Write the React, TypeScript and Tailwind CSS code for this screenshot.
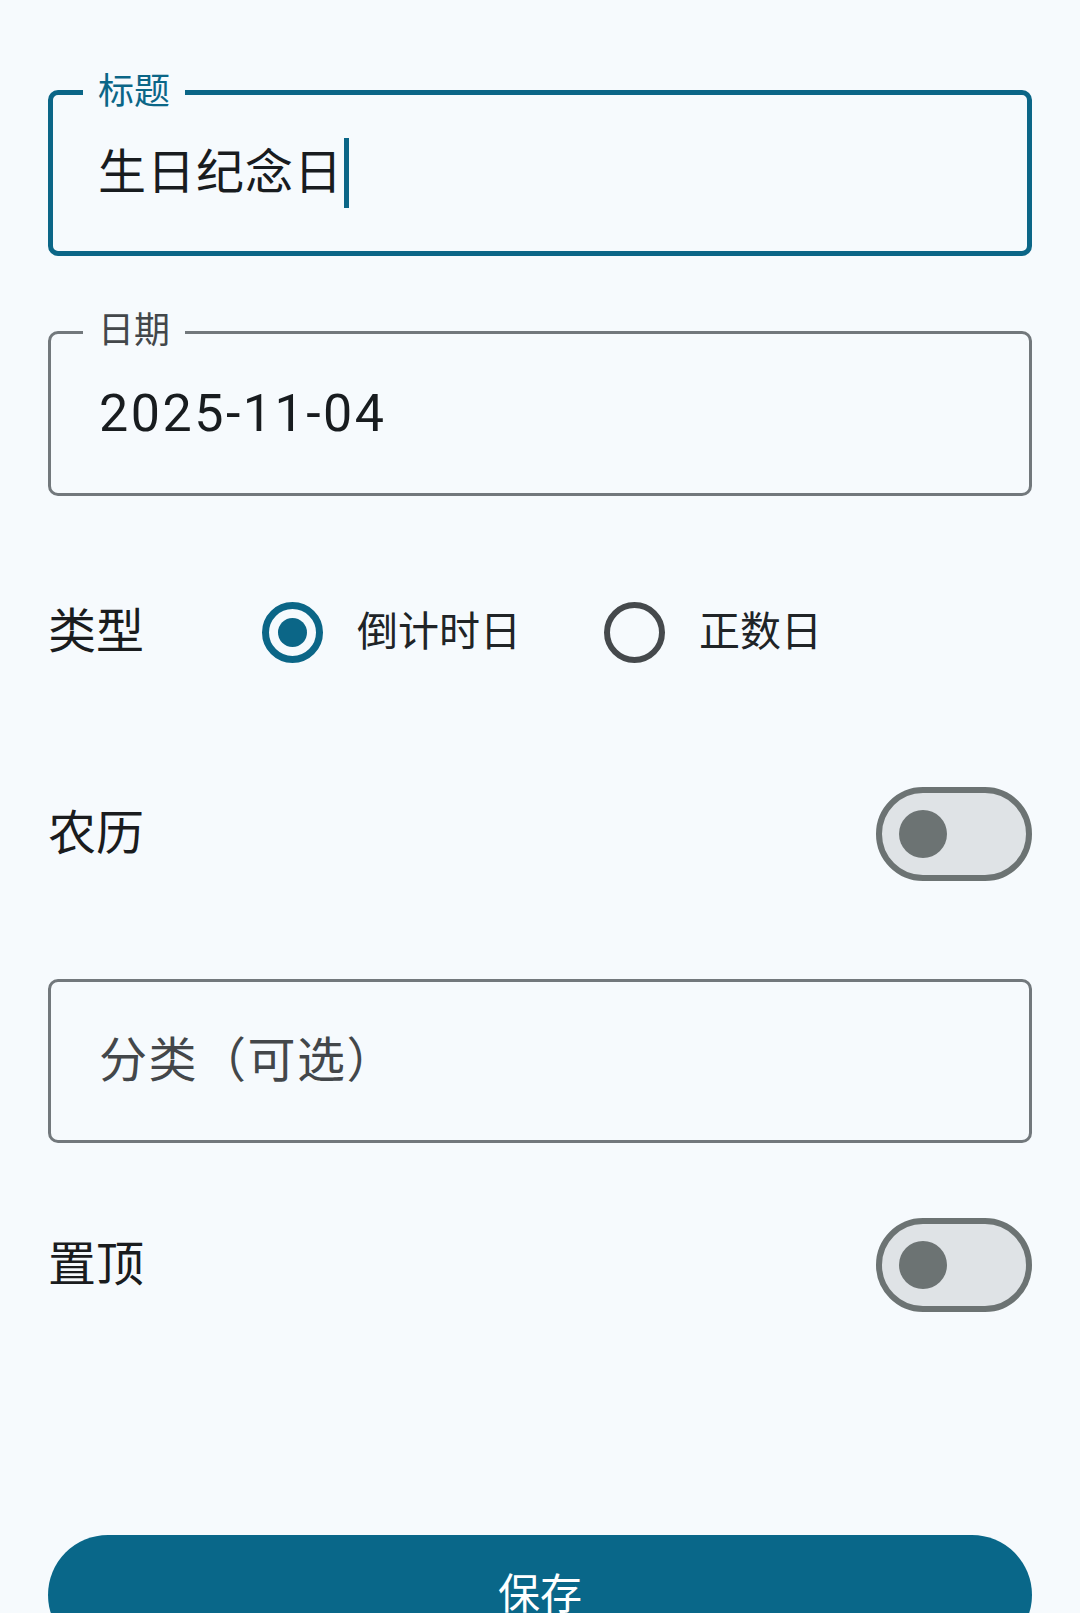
import { useState } from "react";

const font = "font-['Roboto','Noto_Sans_CJK_SC',sans-serif]";

function Toggle({ on, onChange }: { on: boolean; onChange: (v: boolean) => void }) {
  return (
    <button
      type="button"
      onClick={() => onChange(!on)}
      className="flex h-[94px] w-[156px] items-center rounded-full border-[6px] border-[#6c7373] bg-[#dfe3e6] px-[17px]"
    >
      <span className="block size-[48px] rounded-full bg-[#6c7373]" />
    </button>
  );
}

function Radio({ checked, label, onClick }: { checked: boolean; label: string; onClick: () => void }) {
  return (
    <button type="button" onClick={onClick} className="flex items-center gap-[34px]">
      {checked ? (
        <span className="flex size-[61px] items-center justify-center rounded-full border-[7px] border-[#0b6687]">
          <span className="block size-[29px] rounded-full bg-[#0b6687]" />
        </span>
      ) : (
        <span className="block size-[61px] rounded-full border-[6px] border-[#45494c]" />
      )}
      <span className="text-[41px] leading-none text-[#202427]">{label}</span>
    </button>
  );
}

export default function App() {
  const [type, setType] = useState<"down" | "up">("down");
  const [lunar, setLunar] = useState(false);
  const [pinned, setPinned] = useState(false);

  return (
    <div className={`min-h-[1613px] bg-[#f6fafd] px-12 pt-[90px] ${font}`}>
      {/* title, focused */}
      <div className="relative flex h-[166px] items-center rounded-[10px] border-[5px] border-[#0b6687] pl-[45px]">
        <span className="absolute -top-[21px] left-[30px] bg-[#f6fafd] px-[15px] text-[36px] leading-none text-[#0b6687]">
          标题
        </span>
        <span className="text-[48px] leading-none tracking-[1px] text-[#181c1f]">生日纪念日</span>
        <span className="ml-[1px] block h-[70px] w-[5px] bg-[#0b6687]" />
      </div>

      {/* date */}
      <div className="relative mt-[75px] flex h-[165px] items-center rounded-[10px] border-[3px] border-[#72787c] pl-[48px]">
        <span className="absolute -top-[21px] left-[32px] bg-[#f6fafd] px-[15px] text-[36px] leading-none text-[#43474a]">
          日期
        </span>
        <span className="text-[52px] leading-none tracking-[2.5px] text-[#181c1f]">2025-11-04</span>
      </div>

      {/* type */}
      <div className="mt-[89px] flex h-[94px] items-center">
        <span className="w-[214px] text-[48px] leading-none text-[#1a1c1e]">类型</span>
        <Radio checked={type === "down"} label="倒计时日" onClick={() => setType("down")} />
        <span className="w-[83px]" />
        <Radio checked={type === "up"} label="正数日" onClick={() => setType("up")} />
      </div>

      {/* lunar */}
      <div className="mt-[108px] flex h-[93px] items-center justify-between">
        <span className="text-[48px] leading-none text-[#1a1c1e]">农历</span>
        <Toggle on={lunar} onChange={setLunar} />
      </div>

      {/* category */}
      <div className="mt-[99px] flex h-[164px] items-center rounded-[10px] border-[3px] border-[#72787c] pl-[48px]">
        <span className="text-[48px] leading-none tracking-[1.5px] text-[#43474a]">分类（可选）</span>
      </div>

      {/* pinned */}
      <div className="mt-[75px] flex h-[94px] items-center justify-between">
        <span className="text-[48px] leading-none text-[#1a1c1e]">置顶</span>
        <Toggle on={pinned} onChange={setPinned} />
      </div>

      <button
        type="button"
        className="mt-[223px] flex h-[120px] w-full items-center justify-center rounded-full bg-[#096789] text-[42px] leading-none text-white"
      >
        保存
      </button>
    </div>
  );
}
